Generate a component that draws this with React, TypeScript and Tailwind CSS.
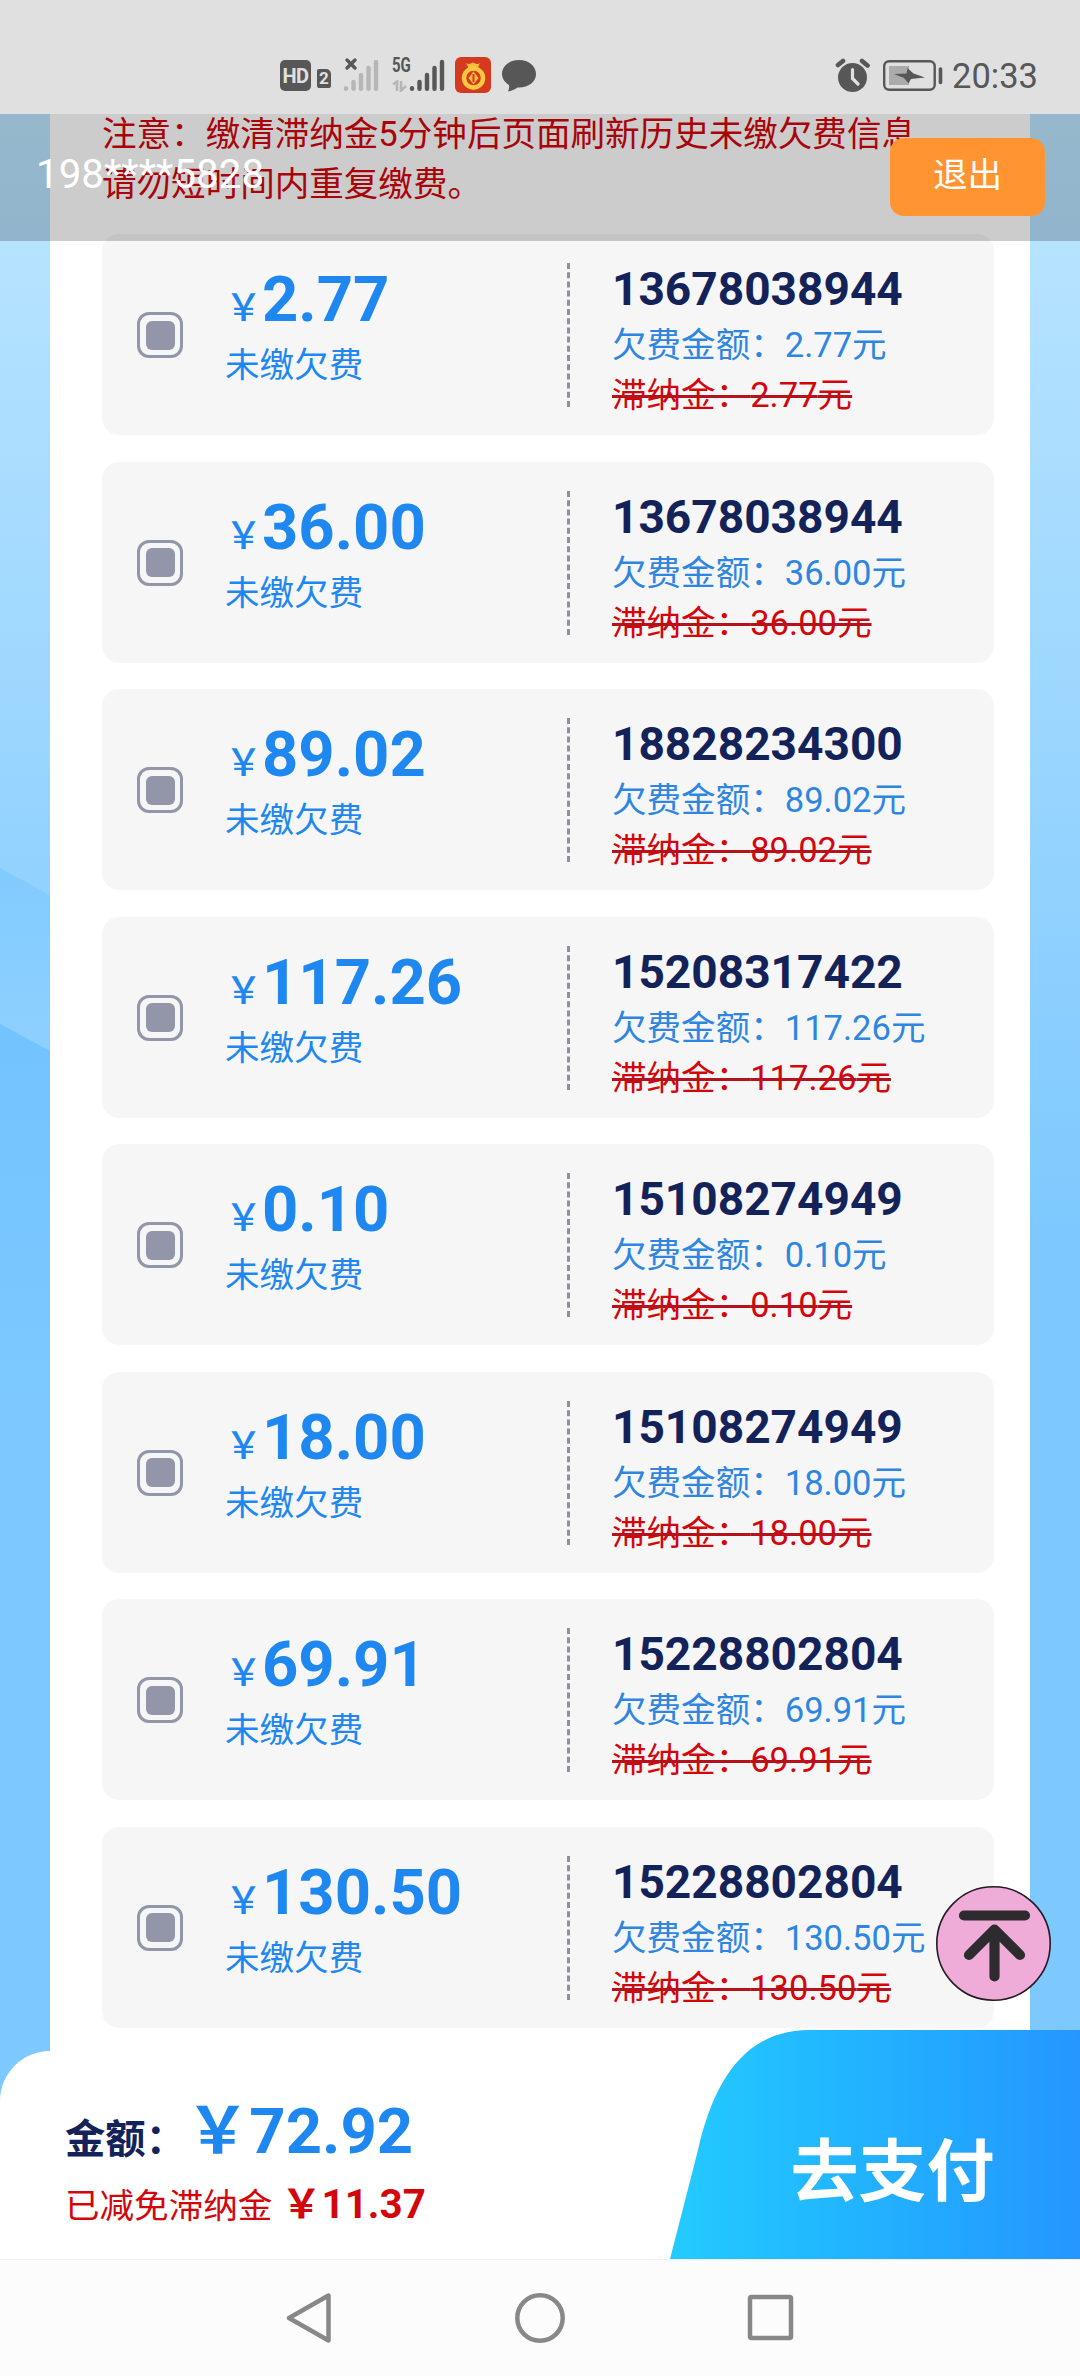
import React from "react";

interface Bill {
  phone: string;
  amount: string;
}

const bills: Bill[] = [
  { phone: "13678038944", amount: "2.77" },
  { phone: "13678038944", amount: "36.00" },
  { phone: "18828234300", amount: "89.02" },
  { phone: "15208317422", amount: "117.26" },
  { phone: "15108274949", amount: "0.10" },
  { phone: "15108274949", amount: "18.00" },
  { phone: "15228802804", amount: "69.91" },
  { phone: "15228802804", amount: "130.50" },
];

const SignalBars = ({ className }: { className: string }) => (
  <svg viewBox="0 0 36 34" className={className} stroke="currentColor" strokeWidth="4.4" strokeLinecap="round">
    <path d="M3 30.2V30.8M10.5 24V30.8M18 17V30.8M25.5 10V30.8M33 4V30.8" />
  </svg>
);

const StatusBar = () => (
  <div className="flex h-[114px] shrink-0 items-start bg-[#e0e0e0] pt-[57px] text-[#575757]">
    <div className="ml-[280px] mt-[3px] flex h-[31px] w-[31px] items-center justify-center rounded-[5px] bg-[#575757] font-['Roboto',sans-serif] text-[20px] font-bold tracking-[-0.5px] text-[#e0e0e0]">
      HD
    </div>
    <div className="ml-[6px] mt-[12px] flex h-[19px] w-[14px] items-center justify-center rounded-[2px] rounded-tr-[5px] bg-[#575757] font-['Roboto',sans-serif] text-[17px] font-bold text-[#e0e0e0]">
      2
    </div>
    <div className="relative ml-[13px] h-[36px] w-[38px]">
      <SignalBars className="mt-[1px] ml-[-1px] h-[34px] w-[36px] fill-none text-[#b6b6b6]" />
      <svg viewBox="0 0 14 14" className="absolute top-0 left-0 h-[14px] w-[14px]">
        <path d="M3 3L11 11M11 3L3 11" stroke="#575757" strokeWidth="3.4" strokeLinecap="round" />
      </svg>
    </div>
    <div className="relative ml-[10px] h-[36px] w-[56px]">
      <SignalBars className="mt-[1px] ml-[17px] h-[34px] w-[36px] fill-none text-[#575757]" />
      <span className="absolute top-[-1px] left-0 origin-left scale-x-[0.75] font-['Roboto',sans-serif] text-[20px] leading-[19px] font-bold">
        5G
      </span>
      <svg viewBox="0 0 16 12" className="absolute top-[23px] left-0 h-[12px] w-[16px] fill-none stroke-[#b6b6b6]">
        <path d="M1 4.5L5 1.5V11M9 1V10.5L14 6" strokeWidth="2.6" />
      </svg>
    </div>
    <svg viewBox="0 0 36 36" className="ml-[7px] h-[36px] w-[36px]">
      <rect width="36" height="36" rx="6" fill="#d53a20" />
      <path d="M11 6Q14 8 18 5.5Q22 8 25 6L22 12H14Z" fill="#f9bd3c" />
      <circle cx="18.5" cy="21" r="9.5" fill="#d53a20" stroke="#fbc840" strokeWidth="4.5" />
      <path d="M18.5 14.5L23.5 21L18.5 27.5L13.5 21Z" fill="#f9bd3c" />
      <path d="M18.5 17V25" stroke="#d53a20" strokeWidth="2" />
    </svg>
    <svg viewBox="0 0 34 32" className="mt-[3px] ml-[11px] h-[32px] w-[34px] fill-[#575757]">
      <path d="M17 0C26.5 0 34 6 34 14S26.5 27.5 17 27.5H15.5C12.5 29.5 9.5 31 6 31.5C7 29.5 7.5 27.5 7 25C2.8 22.5 0 18.5 0 14C0 6 7.5 0 17 0Z" />
    </svg>
    <svg viewBox="0 0 36 36" className="ml-[299px] h-[36px] w-[36px]">
      <circle cx="17.5" cy="20.5" r="14.5" fill="#575757" />
      <path d="M3 8L8 4M27 4L32.5 8.5" stroke="#575757" strokeWidth="4.6" strokeLinecap="round" />
      <path d="M17.5 12.5V21.5L23 27" fill="none" stroke="#e0e0e0" strokeWidth="3.2" strokeLinecap="round" />
    </svg>
    <svg viewBox="0 0 60 32" className="mt-[3px] ml-[12px] h-[32px] w-[60px]">
      <rect x="1.2" y="1.2" width="50.5" height="28.6" rx="5" fill="none" stroke="#575757" strokeWidth="2.4" />
      <rect x="6" y="6" width="20" height="19" fill="#ababab" />
      <path d="M11 14L23.5 13.5L24.500 8L30.5 13.5L42 17.5L28 19L25.500 23.500L21 18Z" fill="#575757" />
      <path d="M57.5 9V22.5" stroke="#575757" strokeWidth="3.6" strokeLinecap="round" />
    </svg>
    <span className="ml-[9px] mt-[-1px] font-['Roboto',sans-serif] text-[34.5px] leading-[40px]">
      20:33
    </span>
  </div>
);

const Header = () => (
  <header className="absolute inset-x-0 top-0 flex h-[127px] items-start justify-between bg-black/20 pt-[24px] pr-[35px] pl-[36px] text-white">
    <span className="mt-[13px] text-[40.32px] leading-[47px]">198****5828</span>
    <button className="h-[78px] w-[155px] rounded-[14px] bg-[#ff9431] pb-[3px] text-[34.56px]">
      退出
    </button>
  </header>
);

const BillCard = ({ phone, amount }: Bill) => (
  <li className="flex h-[201px] items-start rounded-[17px] bg-[#f6f6f6]">
    <span className="mt-[78px] ml-[35px] flex h-[46px] w-[46px] items-center justify-center rounded-[12px] border-[3px] border-[#9296a8]">
      <span className="h-[29px] w-[29px] rounded-[6px] bg-[#9296a8]" />
    </span>
    <div className="ml-[42px] w-[342px] pt-[28px] text-[#1f88f0]">
      <p className="flex h-[74px] items-baseline leading-[74px] font-bold">
        <span className="text-[37px] font-medium">￥</span>
        <span className="text-[63.36px]">{amount}</span>
      </p>
      <p className="mt-[4px] text-[34.56px] leading-[50px]">未缴欠费</p>
    </div>
    <div className="mt-[29px] h-[144px] border-l-[3px] border-dashed border-[#8f909f]" />
    <div className="ml-[42px] pt-[28px]">
      <p className="text-[46.08px] leading-[54px] font-bold text-[#13235a]">{phone}</p>
      <p className="mt-[4px] text-[34.56px] leading-[50px] text-[#2e86e0]">
        欠费金额：{amount}元
      </p>
      <p className="text-[34.56px] leading-[50px] text-[#d3060c]">
        <span className="line-through decoration-[#b5121b] decoration-[3px]">
          滞纳金：{amount}元
        </span>
      </p>
    </div>
  </li>
);

const BackToTop = () => (
  <svg viewBox="0 0 115 115" className="absolute top-[1772px] left-[936px] h-[115px] w-[115px]">
    <circle cx="57.5" cy="57.5" r="56.7" fill="#f0acd8" stroke="#231a22" strokeWidth="1.6" />
    <path
      d="M28 29.5H89M58.5 45V90.5M33 69L58.5 43.5L84 69"
      fill="none"
      stroke="#2d2b2d"
      strokeWidth="10.2"
      strokeLinecap="round"
      strokeLinejoin="round"
    />
  </svg>
);

const PayBar = () => (
  <footer className="absolute inset-x-0 bottom-0 flex h-[229px] items-end">
    <div className="h-[208px] w-full rounded-tl-[50px] bg-white pt-[49px] pl-[65px]">
      <p className="flex h-[62px] items-baseline leading-[62px] font-bold">
        <span className="text-[40.32px] text-[#13235a]">金额：</span>
        <span className="text-[63.36px] text-[#1f88f0]">￥72.92</span>
      </p>
      <p className="mt-[18px] flex items-baseline leading-[50px] text-[#d3060c]">
        <span className="text-[34.56px]">已减免滞纳金</span>
        <span className="ml-[9px] text-[40.32px] font-bold">￥11.37</span>
      </p>
    </div>
    <button className="absolute right-0 bottom-0 h-[229px] w-[410px] bg-linear-to-r from-[#23cbff] to-[#2596ff] pt-[57px] pl-[35px] text-[68px] leading-none font-bold text-white [clip-path:path('M0_229L28_120C44_50_75_0_140_0H410V229Z')]">
      去支付
    </button>
  </footer>
);

const NavBar = () => (
  <nav className="flex h-[117px] shrink-0 items-center justify-center gap-[181px] border-t border-[#f0f0f0] bg-[#fcfcfc]">
    <svg viewBox="0 0 50 50" className="h-[50px] w-[50px] fill-none stroke-[#888] stroke-[4.5]">
      <path d="M44.5 2.5V47.5L5 25Z" strokeLinejoin="round" />
    </svg>
    <svg viewBox="0 0 50 50" className="h-[50px] w-[50px] fill-none stroke-[#888] stroke-[4.5]">
      <circle cx="25" cy="25" r="22.7" />
    </svg>
    <svg viewBox="0 0 50 50" className="h-[50px] w-[50px] fill-none stroke-[#888] stroke-[4.5]">
      <rect x="4" y="4" width="41" height="41" rx="1.5" />
    </svg>
  </nav>
);

// Slanted facets of the page background, visible only along the left edge
const BackgroundFacets = () => (
  <svg viewBox="0 0 50 2145" className="absolute top-0 left-0 h-[2145px] w-[50px]">
    <defs>
      <linearGradient id="facet-a" x1="0" y1="0" x2="0" y2="1">
        <stop offset="0" stopColor="#82cbff" />
        <stop offset="1" stopColor="#8dd0ff" />
      </linearGradient>
      <linearGradient id="facet-b" x1="0" y1="0" x2="0" y2="1">
        <stop offset="0" stopColor="#73c3ff" />
        <stop offset="0.3" stopColor="#7cc8ff" />
        <stop offset="1" stopColor="#7cc8ff" />
      </linearGradient>
    </defs>
    <path d="M0 754L50 781V937L0 910Z" fill="url(#facet-a)" />
    <path d="M0 910L50 937V2145H0Z" fill="url(#facet-b)" />
  </svg>
);

export default function App() {
  return (
    <div className="flex h-[2376px] w-[1080px] flex-col overflow-hidden font-['Roboto','Noto_Sans_CJK_SC',sans-serif]">
      <StatusBar />
      <main className="relative flex-1 overflow-hidden bg-linear-to-b from-[#bde6ff] via-[#7cc8ff] via-53% to-[#7cc8ff]">
        <BackgroundFacets />
        <div className="mx-[50px] h-full bg-white pr-[36px] pl-[52px]">
          <p className="-mt-[5px] text-[34.56px] leading-[50px] text-[#d3060c]">
            注意：缴清滞纳金5分钟后页面刷新历史未缴欠费信息
            <br />
            请勿短时间内重复缴费。
          </p>
          <ul className="mt-[25.4px] flex flex-col gap-[26.5px]">
            {bills.map((bill, i) => (
              <BillCard key={i} {...bill} />
            ))}
          </ul>
        </div>
        <Header />
        <PayBar />
        <BackToTop />
      </main>
      <NavBar />
    </div>
  );
}
